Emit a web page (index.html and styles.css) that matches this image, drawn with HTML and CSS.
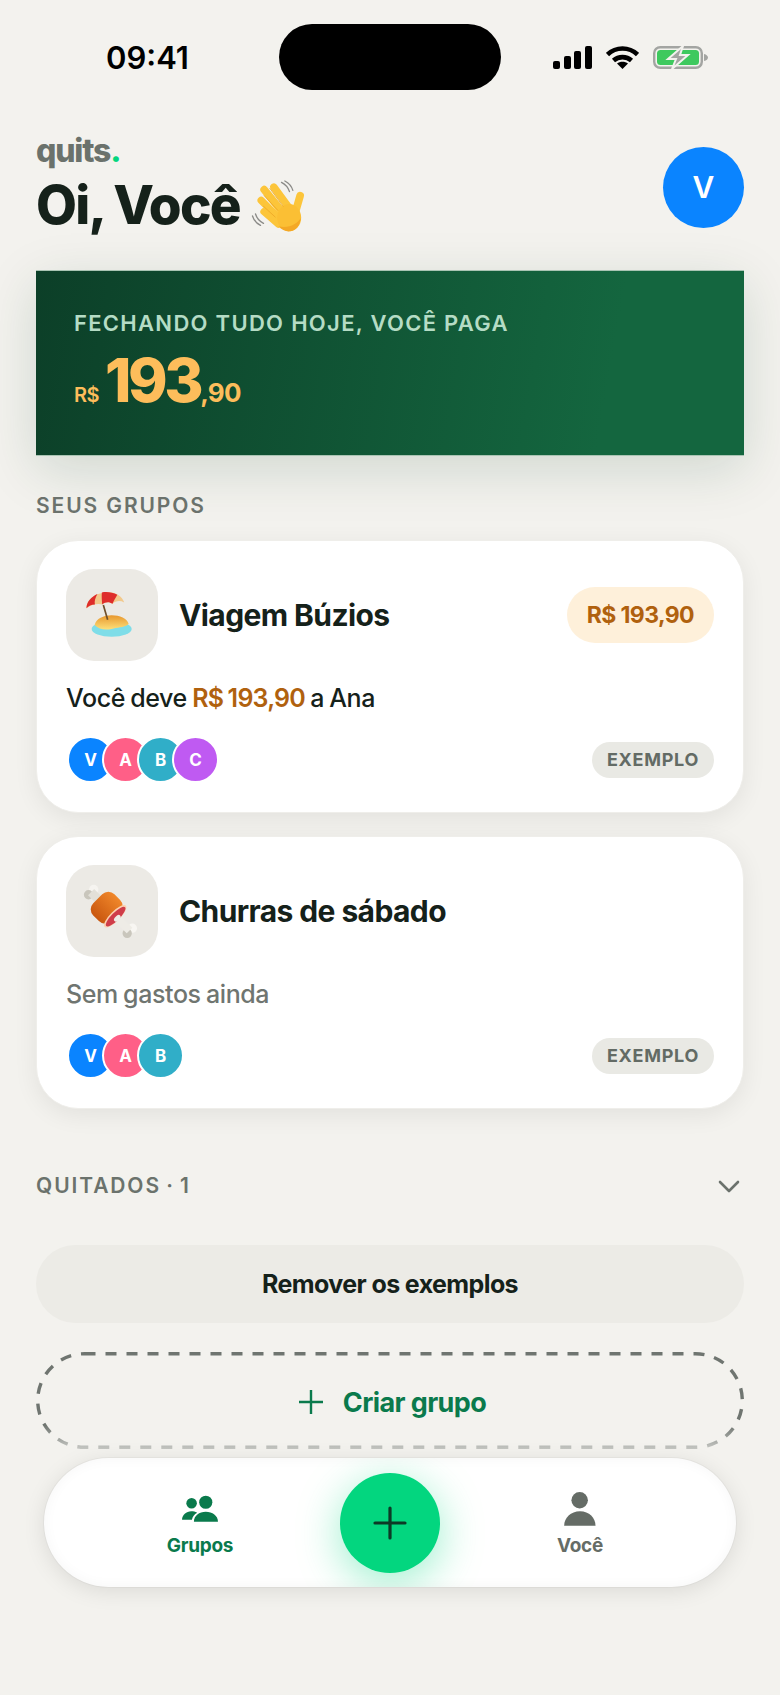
FILE: index.html
```html
<!DOCTYPE html>
<html lang="pt-BR">
<head>
    <meta charset="UTF-8">
    <meta name="viewport" content="width=device-width, initial-scale=1.0">
    <title>quits</title>
    <link rel="stylesheet" href="styles.css">
</head>
<body>
    <div class="screen">
        <div class="status-bar">
            <span class="status-time">09:41</span>
            <div class="island"></div>
            <div class="status-icons">
                <svg width="39" height="23" viewBox="0 0 39 23">
                    <rect x="0" y="15" width="7" height="8" rx="2"/>
                    <rect x="11" y="10" width="7" height="13" rx="2"/>
                    <rect x="21" y="5" width="7" height="18" rx="2"/>
                    <rect x="32" y="0" width="7" height="23" rx="2"/>
                </svg>
                <svg width="33" height="23" viewBox="0 0 33 23" fill="none" stroke="#000" stroke-width="4.600">
                    <path d="M1.500 8.500C10 .5 23 .5 31.500 8.500"/>
                    <path d="M7.500 14.500C12.500 10 20.500 10 25.500 14.500"/>
                    <path d="M16.500 23l-5.500-5.500c3-2.400 8-2.400 11 0z" fill="#000" stroke="none"/>
                </svg>
                <svg width="55" height="23" viewBox="0 0 55 23">
                    <rect x="1.200" y="1.200" width="47.600" height="20.600" rx="6" fill="none" stroke="#a3a5a2" stroke-width="2.400"/>
                    <rect x="4" y="4" width="42" height="15" rx="3.500" fill="#3ec95e"/>
                    <path d="M51 8c2.500.5 4 2 4 3.500s-1.500 3-4 3.500z" fill="#a3a5a2"/>
                    <path d="M30 0L15 13h8l-4 10 16-14h-8z" fill="#a3a5a2" stroke="#f3f2ee" stroke-width="2"/>
                </svg>
            </div>
        </div>

        <main class="content">
            <header class="top">
                <div class="top-text">
                    <div class="logo">quits<span class="logo-dot">.</span></div>
                    <h1 class="hello">Oi, Você
                        <svg class="wave" width="57" height="55" viewBox="54 84 170 165">
                            <g fill="none" stroke="#8b8b88" stroke-width="4" stroke-linecap="round">
                                <path d="M145 94c12 6 20 15 24 28"/>
                                <path d="M155 90c12 6 20 15 24 28"/>
                                <path d="M58 195c4 13 12 22 24 28"/>
                                <path d="M67 189c4 13 12 22 24 28"/>
                            </g>
                            <g fill="none" stroke="#fcc53a" stroke-linecap="round">
                                <path d="M122 108L172 176" stroke-width="22"/>
                                <path d="M93 116L150 186" stroke-width="23"/>
                                <path d="M84 148L140 204" stroke-width="22"/>
                                <path d="M92 182L136 220" stroke-width="21"/>
                                <path d="M201 134L186 186" stroke-width="23"/>
                            </g>
                            <ellipse cx="168" cy="200" rx="36" ry="41" fill="#fbbf34"/>
                            <g fill="none" stroke="#eda726" stroke-width="2.500" stroke-linecap="round">
                                <path d="M110 112L150 166"/>
                                <path d="M93 134L134 178"/>
                                <path d="M91 166L126 198"/>
                            </g>
                            <path d="M136 226c10 12 24 17 36 15 18-3 28-18 31-40-11 18-36 32-67 25z" fill="#f4a825"/>
                        </svg>
                    </h1>
                </div>
                <div class="avatar-big">V</div>
            </header>

            <section class="banner">
                <div class="banner-label">FECHANDO TUDO HOJE, VOCÊ PAGA</div>
                <div class="banner-amount">
                    <span class="amount-cur">R$</span><span class="amount-int">193</span><span class="amount-cents">,90</span>
                </div>
            </section>

            <h2 class="section-label">SEUS GRUPOS</h2>

            <article class="card">
                <div class="card-head">
                    <div class="tile">
                        <svg width="92" height="92" viewBox="18 12 276 276">
                            <defs>
                                <linearGradient id="sand" x1="0" y1="0" x2="0" y2="1">
                                    <stop offset="0" stop-color="#e8982e"/>
                                    <stop offset="1" stop-color="#fde07a"/>
                                </linearGradient>
                            </defs>
                            <ellipse cx="155" cy="192" rx="60" ry="23" fill="#7fdde8"/>
                            <path d="M104 180c4-19 27-29 51-29s47 10 51 26c-16 13-35 9-51 15-18 4-39 2-51-12z" fill="url(#sand)"/>
                            <path d="M130 120l13 44" stroke="#6e4e2a" stroke-width="5"/>
                            <g transform="translate(-13 -11) scale(1.100)">
                                <path d="M84 128c0-26 28-44 60-44 22 0 38 12 43 28-12-6-24-4-32 4-8-6-20-6-28 2-12-4-30 0-43 10z" fill="#f2c98c"/>
                                <path d="M84 128c0-18 14-32 30-39-6 10-9 20-7 29-10 0-17 4-23 10zM126 85c14-3 30 0 42 6-3 7-10 16-13 25-8-6-20-6-28 2-1-12-2-22-1-33z" fill="#de2d2b"/>
                            </g>
                        </svg>
                    </div>
                    <h3 class="card-title">Viagem Búzios</h3>
                    <span class="amount-pill">R$ 193,90</span>
                </div>
                <p class="card-sub">Você deve <span class="owed">R$ 193,90</span> a Ana</p>
                <div class="card-foot">
                    <div class="people">
                        <span class="person blue">V</span>
                        <span class="person pink">A</span>
                        <span class="person teal">B</span>
                        <span class="person purple">C</span>
                    </div>
                    <span class="tag">EXEMPLO</span>
                </div>
            </article>

            <article class="card">
                <div class="card-head">
                    <div class="tile">
                        <svg width="92" height="92" viewBox="18 12 276 276">
                            <defs>
                                <linearGradient id="roast" x1="0" y1="0" x2="0" y2="1">
                                    <stop offset="0" stop-color="#f0872a"/>
                                    <stop offset="1" stop-color="#c9570f"/>
                                </linearGradient>
                            </defs>
                            <g transform="rotate(45 145 145)">
                                <circle cx="72" cy="134" r="14" fill="#f6f4f0"/>
                                <circle cx="72" cy="156" r="14" fill="#c9c6bc"/>
                                <rect x="72" y="132" width="36" height="26" fill="#e3e0d8"/>
                                <circle cx="236" cy="134" r="14" fill="#f8f6f2"/>
                                <circle cx="236" cy="156" r="14" fill="#c9c6bc"/>
                                <rect x="175" y="133" width="60" height="24" fill="#eeece6"/>
                                <rect x="100" y="100" width="76" height="90" rx="26" fill="url(#roast)"/>
                                <ellipse cx="174" cy="145" rx="15" ry="45" fill="#fbd0b0"/>
                                <ellipse cx="176" cy="145" rx="12" ry="40" fill="#cf3d4a"/>
                                <ellipse cx="183" cy="145" rx="7" ry="12" fill="#eeece6"/>
                            </g>
                        </svg>
                    </div>
                    <h3 class="card-title">Churras de sábado</h3>
                </div>
                <p class="card-sub muted">Sem gastos ainda</p>
                <div class="card-foot">
                    <div class="people">
                        <span class="person blue">V</span>
                        <span class="person pink">A</span>
                        <span class="person teal">B</span>
                    </div>
                    <span class="tag">EXEMPLO</span>
                </div>
            </article>

            <div class="settled">
                <span class="section-label">QUITADOS · 1</span>
                <svg width="22" height="13" viewBox="0 0 22 13" fill="none" stroke="#6b726c" stroke-width="2.600" stroke-linecap="round" stroke-linejoin="round">
                    <path d="M2 2l9 9 9-9"/>
                </svg>
            </div>

            <button class="btn-remove">Remover os exemplos</button>
            <button class="btn-create">
                <svg class="dash" width="708" height="97" viewBox="0 0 708 97" fill="none" stroke="#6f7570" stroke-width="3.400" stroke-dasharray="11 10">
                    <rect x="1.700" y="1.700" width="704.600" height="93.600" rx="46.800"/>
                </svg>
                <svg width="24" height="24" viewBox="0 0 24 24" stroke="#0a7a4c" stroke-width="2.400">
                    <path d="M12 0v24M0 12h24"/>
                </svg>
                Criar grupo
            </button>
        </main>

        <div class="fade"></div>

        <nav class="tabbar">
            <a class="tab active">
                <span class="tab-icon">
                    <svg width="38" height="28" viewBox="480 195 115 85" fill="#0a7a4c">
                        <circle cx="555" cy="217" r="20"/>
                        <circle cx="512" cy="220" r="16"/>
                        <path d="M519 276c0-18 16-30 36-30s37 12 37 30z"/>
                        <path d="M483 270c0-15 13-26 28-26 6 0 12 1 18 5-9 5-14 12-16 21z"/>
                    </svg>
                </span>
                Grupos
            </a>
            <button class="fab">
                <svg width="34" height="34" viewBox="0 0 34 34" stroke="#0d3a26" stroke-width="3.200" stroke-linecap="round">
                    <path d="M17 2v30M2 17h30"/>
                </svg>
            </button>
            <a class="tab">
                <span class="tab-icon">
                    <svg width="32" height="34" viewBox="553 186 96 103" fill="#656c66">
                        <circle cx="600" cy="211" r="25"/>
                        <path d="M553 288c0-24 20-44 48-44s47 20 47 44z"/>
                    </svg>
                </span>
                Você
            </a>
        </nav>
    </div>
</body>
</html>
```

FILE: styles.css
```css
* {
    box-sizing: border-box;
}

body {
    margin: 0;
    font-family: Inter, 'Liberation Sans', sans-serif;
    background: #f3f2ee;
    color: #15211a;
}

.screen {
    position: relative;
    width: 780px;
    height: 1695px;
    overflow: hidden;
    background: #f3f2ee;
}

/* status bar */
.status-bar {
    display: grid;
    grid-template-columns: 279px 222px 1fr;
    align-items: center;
    padding-top: 24px;
}

.status-time {
    padding-left: 106px;
    padding-top: 1px;
    font-size: 31px;
    font-weight: 600;
    color: #000;
}

.island {
    height: 66px;
    border-radius: 33px;
    background: #000;
}

.status-icons {
    display: flex;
    align-items: center;
    gap: 14px;
    padding-left: 52px;
}

.content {
    padding: 0 36px;
}

/* header */
.top {
    display: flex;
    justify-content: space-between;
    align-items: center;
    margin-top: 44px;
    height: 106px;
}

.top-text {
    align-self: flex-start;
}

.logo {
    font-size: 32px;
    line-height: 34px;
    font-weight: 800;
    letter-spacing: -1.200px;
    color: #6b726c;
}

.logo-dot {
    color: #03d67f;
}

.hello {
    display: flex;
    align-items: center;
    gap: 11px;
    margin: 6px 0 0;
    font-size: 53px;
    line-height: 62px;
    font-weight: 800;
    letter-spacing: -1.700px;
    color: #15211a;
}

.wave {
    margin-top: 3px;
}

.avatar-big {
    display: flex;
    justify-content: center;
    align-items: center;
    width: 81px;
    height: 81px;
    border-radius: 50%;
    background: #0a84ff;
    color: #fff;
    font-size: 30px;
    font-weight: 600;
}

/* banner */
.banner {
    height: 186px;
    margin-top: 30px;
    padding: 39px 38px;
    background: linear-gradient(100deg, #0c3f28, #14663f 80%);
    border: 1px solid #a9c4b3;
    border-width: 1px 0;
    box-shadow: 0 14px 50px rgba(13, 64, 41, 0.15);
}

.banner-label {
    font-size: 22px;
    line-height: 26px;
    font-weight: 600;
    letter-spacing: 1.300px;
    color: #b5dcc5;
}

.banner-amount {
    display: flex;
    align-items: baseline;
    margin-top: 10px;
    color: #fdbd5b;
    font-weight: 800;
}

.amount-cur {
    margin-right: 6px;
    font-size: 20px;
    font-weight: 600;
    letter-spacing: -0.5px;
}

.amount-int {
    font-size: 60px;
    line-height: 68px;
    letter-spacing: -3.500px;
}

.amount-cents {
    font-size: 26px;
    font-weight: 700;
    letter-spacing: -0.7px;
}

/* sections */
.section-label {
    margin: 0;
    font-size: 21px;
    line-height: 24px;
    font-weight: 600;
    letter-spacing: 1.900px;
    color: #6b726c;
}

.content > .section-label {
    margin-top: 38px;
    margin-bottom: 22px;
}

.settled .section-label {
    word-spacing: -2px;
}

/* group cards */
.card {
    height: 273px;
    margin-bottom: 23px;
    padding: 28px 29px 0;
    border: 1px solid #efeeea;
    border-radius: 42px;
    background: #fff;
    box-shadow: 0 6px 24px rgba(0, 0, 0, 0.07);
}

.card-head {
    display: flex;
    align-items: center;
}

.tile {
    flex: none;
    width: 92px;
    height: 92px;
    border-radius: 28px;
    background: #eceae5;
}

.tile svg {
    display: block;
}

.card-title {
    flex: 1;
    margin: 0 0 0 21px;
    font-size: 30px;
    font-weight: 700;
    letter-spacing: -0.6px;
    color: #15211a;
}

.amount-pill {
    padding: 0 20px;
    height: 56px;
    line-height: 56px;
    border-radius: 28px;
    background: #fef0da;
    color: #b0610e;
    font-size: 23px;
    font-weight: 700;
    letter-spacing: -0.6px;
}

.card-sub {
    margin: 20px 0 0;
    font-size: 25px;
    line-height: 34px;
    font-weight: 500;
    letter-spacing: -0.4px;
    word-spacing: -1px;
}

.card-sub.muted {
    color: #6f7570;
}

.owed {
    color: #b0610e;
    font-weight: 600;
    letter-spacing: -0.8px;
}

.card-foot {
    display: flex;
    justify-content: space-between;
    align-items: center;
    margin-top: 21px;
}

.people {
    display: flex;
    margin-left: 1px;
}

.person {
    display: flex;
    justify-content: center;
    align-items: center;
    width: 47px;
    height: 47px;
    margin-right: -12px;
    border: 2px solid #fff;
    border-radius: 50%;
    color: #fff;
    font-size: 17px;
    font-weight: 700;
}

.blue { background: #0a84ff; }
.pink { background: #ff5f87; }
.teal { background: #30aec8; }
.purple { background: #bf5af2; }

.tag {
    height: 36px;
    padding: 0 15px;
    line-height: 36px;
    border-radius: 18px;
    background: #e9e9e4;
    color: #636b65;
    font-size: 18px;
    font-weight: 700;
    letter-spacing: 0.7px;
}

.settled {
    display: flex;
    justify-content: space-between;
    align-items: center;
    margin-top: 65px;
    padding-right: 4px;
}

/* buttons */
.btn-remove,
.btn-create {
    display: flex;
    justify-content: center;
    align-items: center;
    width: 100%;
    font-family: inherit;
    font-weight: 700;
    letter-spacing: -0.6px;
}

.btn-remove {
    height: 78px;
    margin-top: 47px;
    border: none;
    border-radius: 39px;
    background: #ecebe6;
    color: #15211a;
    font-size: 25px;
}

.btn-create {
    position: relative;
    gap: 20px;
    height: 97px;
    margin-top: 29px;
    padding: 3px 0 0 5px;
    border: none;
    background: transparent;
    color: #0a7a4c;
    font-size: 27px;
}

.dash {
    position: absolute;
    left: 0;
    top: 0;
}

/* bottom nav */
.fade {
    position: absolute;
    left: 0;
    right: 0;
    bottom: 0;
    height: 270px;
    background: linear-gradient(rgba(243, 242, 238, 0), rgba(243, 242, 238, 0.6) 8%, #f3f2ee 16%);
}

.tabbar {
    position: absolute;
    left: 44px;
    bottom: 108px;
    display: grid;
    grid-template-columns: 1fr 100px 1fr;
    align-items: center;
    width: 692px;
    height: 129px;
    padding: 0 16px;
    overflow: hidden;
    border-radius: 65px;
    background: #fff;
    box-shadow: 0 4px 22px rgba(0, 0, 0, 0.1), 0 0 0 1px rgba(0, 0, 0, 0.03), inset 0 0 14px rgba(0, 0, 0, 0.04);
}

.tab {
    display: flex;
    flex-direction: column;
    align-items: center;
    gap: 8px;
    padding-top: 5px;
    color: #656c66;
    font-size: 19px;
    line-height: 24px;
    font-weight: 700;
    letter-spacing: -0.3px;
}

.tab.active {
    color: #0a7a4c;
}

.tab-icon {
    display: flex;
    justify-content: center;
    align-items: center;
    height: 34px;
}

.fab {
    display: flex;
    justify-content: center;
    align-items: center;
    width: 100px;
    height: 100px;
    padding: 0;
    border: none;
    border-radius: 50%;
    background: #03d67f;
    box-shadow: 0 10px 44px rgba(3, 214, 127, 0.4);
}
```
